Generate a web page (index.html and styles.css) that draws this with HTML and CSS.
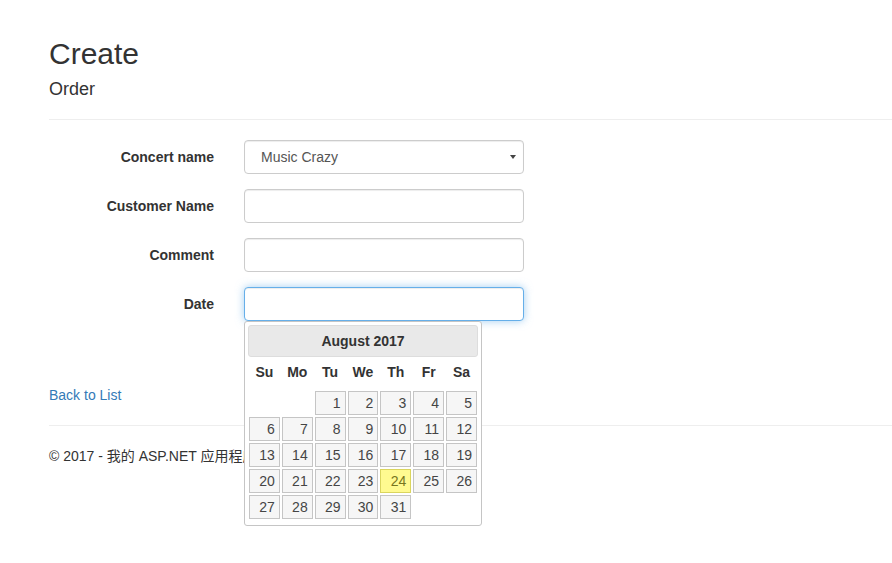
FILE: index.html
```html
<!DOCTYPE html>
<html lang="zh-CN">
<head>
<meta charset="utf-8">
<title>Create - Order</title>
<link rel="stylesheet" href="styles.css">
</head>
<body>
<div class="body-content">
  <h2 class="page-title">Create</h2>
  <form class="form-horizontal">
    <h4 class="sub-title">Order</h4>
    <hr class="rule">
    <div class="form-group">
      <label class="control-label" for="concert">Concert name</label>
      <div class="select-wrap">
        <select id="concert" class="form-control select-control">
          <option>Music Crazy</option>
        </select>
        <svg class="select-arrow" width="6" height="4" viewBox="0 0 6 4"><path d="M0 0h6L3 4z" fill="#444"/></svg>
      </div>
    </div>
    <div class="form-group">
      <label class="control-label" for="customer">Customer Name</label>
      <input id="customer" class="form-control" type="text">
    </div>
    <div class="form-group">
      <label class="control-label" for="comment">Comment</label>
      <input id="comment" class="form-control" type="text">
    </div>
    <div class="form-group">
      <label class="control-label" for="date">Date</label>
      <div class="date-wrap">
        <input id="date" class="form-control focused" type="text">
        <div class="datepicker">
          <div class="dp-header"><span class="dp-title">August 2017</span></div>
          <table class="dp-cal">
            <thead>
              <tr><th>Su</th><th>Mo</th><th>Tu</th><th>We</th><th>Th</th><th>Fr</th><th>Sa</th></tr>
            </thead>
            <tbody>
              <tr><td></td><td></td><td><a class="day">1</a></td><td><a class="day">2</a></td><td><a class="day">3</a></td><td><a class="day">4</a></td><td><a class="day">5</a></td></tr>
              <tr><td><a class="day">6</a></td><td><a class="day">7</a></td><td><a class="day">8</a></td><td><a class="day">9</a></td><td><a class="day">10</a></td><td><a class="day">11</a></td><td><a class="day">12</a></td></tr>
              <tr><td><a class="day">13</a></td><td><a class="day">14</a></td><td><a class="day">15</a></td><td><a class="day">16</a></td><td><a class="day">17</a></td><td><a class="day">18</a></td><td><a class="day">19</a></td></tr>
              <tr><td><a class="day">20</a></td><td><a class="day">21</a></td><td><a class="day">22</a></td><td><a class="day">23</a></td><td><a class="day today">24</a></td><td><a class="day">25</a></td><td><a class="day">26</a></td></tr>
              <tr><td><a class="day">27</a></td><td><a class="day">28</a></td><td><a class="day">29</a></td><td><a class="day">30</a></td><td><a class="day">31</a></td><td></td><td></td></tr>
            </tbody>
          </table>
        </div>
      </div>
    </div>
    <div class="form-group">
      <span></span>
      <div><button type="button" class="btn">Create</button></div>
    </div>
  </form>
  <div class="back"><a href="#" class="link">Back to List</a></div>
  <hr class="rule footer-rule">
  <footer class="footer">
    <p>© 2017 - 我的 ASP.NET 应用程序</p>
  </footer>
</div>
</body>
</html>
```

FILE: styles.css
```css
* { box-sizing: border-box; }

html, body {
  margin: 0;
  padding: 0;
  background: #fff;
}

body {
  font-family: "Liberation Sans", Arial, "Noto Sans CJK SC", sans-serif;
  font-size: 14px;
  line-height: 20px;
  color: #333;
  min-height: 563px;
}

.body-content {
  padding: 37px 0 0 49px;
  min-height: 563px;
}

.page-title {
  margin: 0 0 9px;
  font-size: 30px;
  line-height: 33px;
  font-weight: 500;
}

.sub-title {
  margin: 0;
  font-size: 18px;
  line-height: 20px;
  font-weight: 500;
}

.rule {
  margin: 20px 0;
  border: 0;
  border-top: 1px solid #eee;
  height: 0;
}

.form-group {
  display: grid;
  grid-template-columns: 165px 280px;
  column-gap: 30px;
  margin-bottom: 15px;
}

.control-label {
  text-align: right;
  font-weight: bold;
  padding-top: 7px;
  line-height: 20px;
}

.form-control {
  display: block;
  width: 280px;
  height: 34px;
  padding: 6px 12px;
  font-family: inherit;
  font-size: 14px;
  line-height: 20px;
  color: #555;
  background: #fff;
  border: 1px solid #ccc;
  border-radius: 4px;
  box-shadow: inset 0 1px 1px rgba(0, 0, 0, .075);
  outline: none;
  margin: 0;
}

.form-control.focused {
  border-color: #66afe9;
  box-shadow: inset 0 1px 1px rgba(0, 0, 0, .075), 0 0 8px rgba(102, 175, 233, .6);
}

.select-wrap {
  position: relative;
  width: 280px;
}

.select-control {
  -webkit-appearance: none;
  appearance: none;
  padding-left: 16px;
}

.select-arrow {
  position: absolute;
  right: 8px;
  top: 15px;
}

.date-wrap {
  position: relative;
  width: 280px;
}

.btn {
  display: inline-block;
  height: 34px;
  padding: 6px 12px;
  font-family: inherit;
  font-size: 14px;
  line-height: 20px;
  color: #333;
  background: #fff;
  border: 1px solid #ccc;
  border-radius: 4px;
}

.back {
  line-height: 20px;
}

.link {
  color: #337ab7;
  text-decoration: none;
}

.footer-rule {
  margin-top: 20px;
}

.footer p {
  margin: 0;
  line-height: 20px;
}

/* datepicker */
.datepicker {
  position: absolute;
  top: 34px;
  left: 0;
  z-index: 10;
  width: 238px;
  padding: 3px 3px 0;
  background: #fff;
  border: 1px solid #c5c5c5;
  border-radius: 3px;
  font-family: "Liberation Sans", Arial, sans-serif;
  font-size: 14px;
  color: #333;
}

.dp-header {
  height: 32px;
  background: #e9e9e9;
  border: 1px solid #ddd;
  border-radius: 3px;
  text-align: center;
}

.dp-title {
  font-weight: bold;
  line-height: 30px;
  color: #333;
}

.dp-cal {
  width: 100%;
  border-collapse: collapse;
  margin: 0 0 5px;
}

.dp-cal th {
  padding: 5px 0 8px;
  line-height: 20px;
  font-weight: bold;
  text-align: center;
  color: #333;
}

.dp-cal td {
  padding: 1px;
  border: 0;
}

.day {
  display: block;
  padding: 3px 4px;
  line-height: 16px;
  text-align: right;
  color: #454545;
  background: #f6f6f6;
  border: 1px solid #c5c5c5;
  text-decoration: none;
}

.day.today {
  background: #fffa90;
  border-color: #dad55e;
  color: #777620;
}
```
